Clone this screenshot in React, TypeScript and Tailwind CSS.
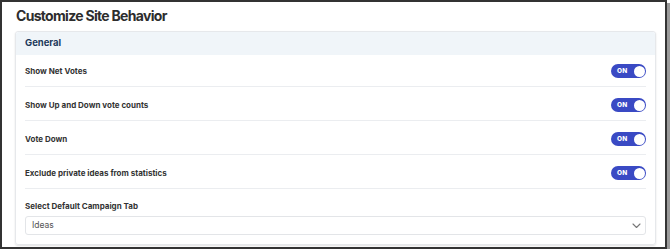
import React from 'react';

const settings = [
    'Show Net Votes',
    'Show Up and Down vote counts',
    'Vote Down',
    'Exclude private ideas from statistics',
];

const Toggle = () => (
    <div className="w-[35px] h-[14px] rounded-full bg-[#3a4ac4] flex items-center justify-between pl-[6px] pr-[1.5px] shrink-0">
        <span className="text-[6.5px] font-extrabold text-white tracking-[0.2px] leading-none">ON</span>
        <span className="w-[11px] h-[11px] rounded-full bg-white" />
    </div>
);

const App = () => {
    return (
        <div
            className="w-[667px] h-[249px] bg-white border-2 border-[#333] shadow-[3px_3px_0_#9a9a9a] overflow-hidden"
            style={{ fontFamily: 'Inter, "Noto Sans", sans-serif' }}
        >
            <h1 className="text-[14px] font-bold text-[#2d2d2d] leading-none tracking-[-0.7px] pl-[14px] pt-[7px] h-[29px]">
                Customize Site Behavior
            </h1>

            <div className="ml-[13px] mr-[9px] border border-[#e6e8eb] rounded-[3px] shadow-[0_1px_2px_rgba(0,0,0,0.12)]">
                <div className="h-[23px] bg-[#f0f5f9] flex items-center px-[9px] rounded-t-[3px]">
                    <span className="text-[9.5px] font-bold text-[#1e3a5c]">General</span>
                </div>

                <div className="px-[9px]">
                    {settings.map((label, i) => (
                        <div
                            key={label}
                            className={`flex items-center justify-between border-b border-[#ebedf0] pb-[8px] ${i === 0 ? 'pt-[9px]' : 'pt-[11px]'}`}
                        >
                            <span className="text-[8px] font-bold text-[#333] leading-none">{label}</span>
                            <Toggle />
                        </div>
                    ))}

                    <div className="pt-[13px] pb-[9px]">
                        <div className="text-[8px] font-bold text-[#333] leading-none mb-[6px]">
                            Select Default Campaign Tab
                        </div>
                        <div className="h-[19px] border border-[#e3e5e8] rounded-[3px] flex items-center justify-between pl-[6px] pr-[4px]">
                            <span className="text-[8.5px] text-[#555]">Ideas</span>
                            <svg width="9" height="6" viewBox="0 0 9 6" fill="none">
                                <path d="M1 1l3.5 3.5L8 1" stroke="#777" strokeWidth="1.1" strokeLinecap="round" strokeLinejoin="round" />
                            </svg>
                        </div>
                    </div>
                </div>
            </div>
        </div>
    );
};

export default App;
